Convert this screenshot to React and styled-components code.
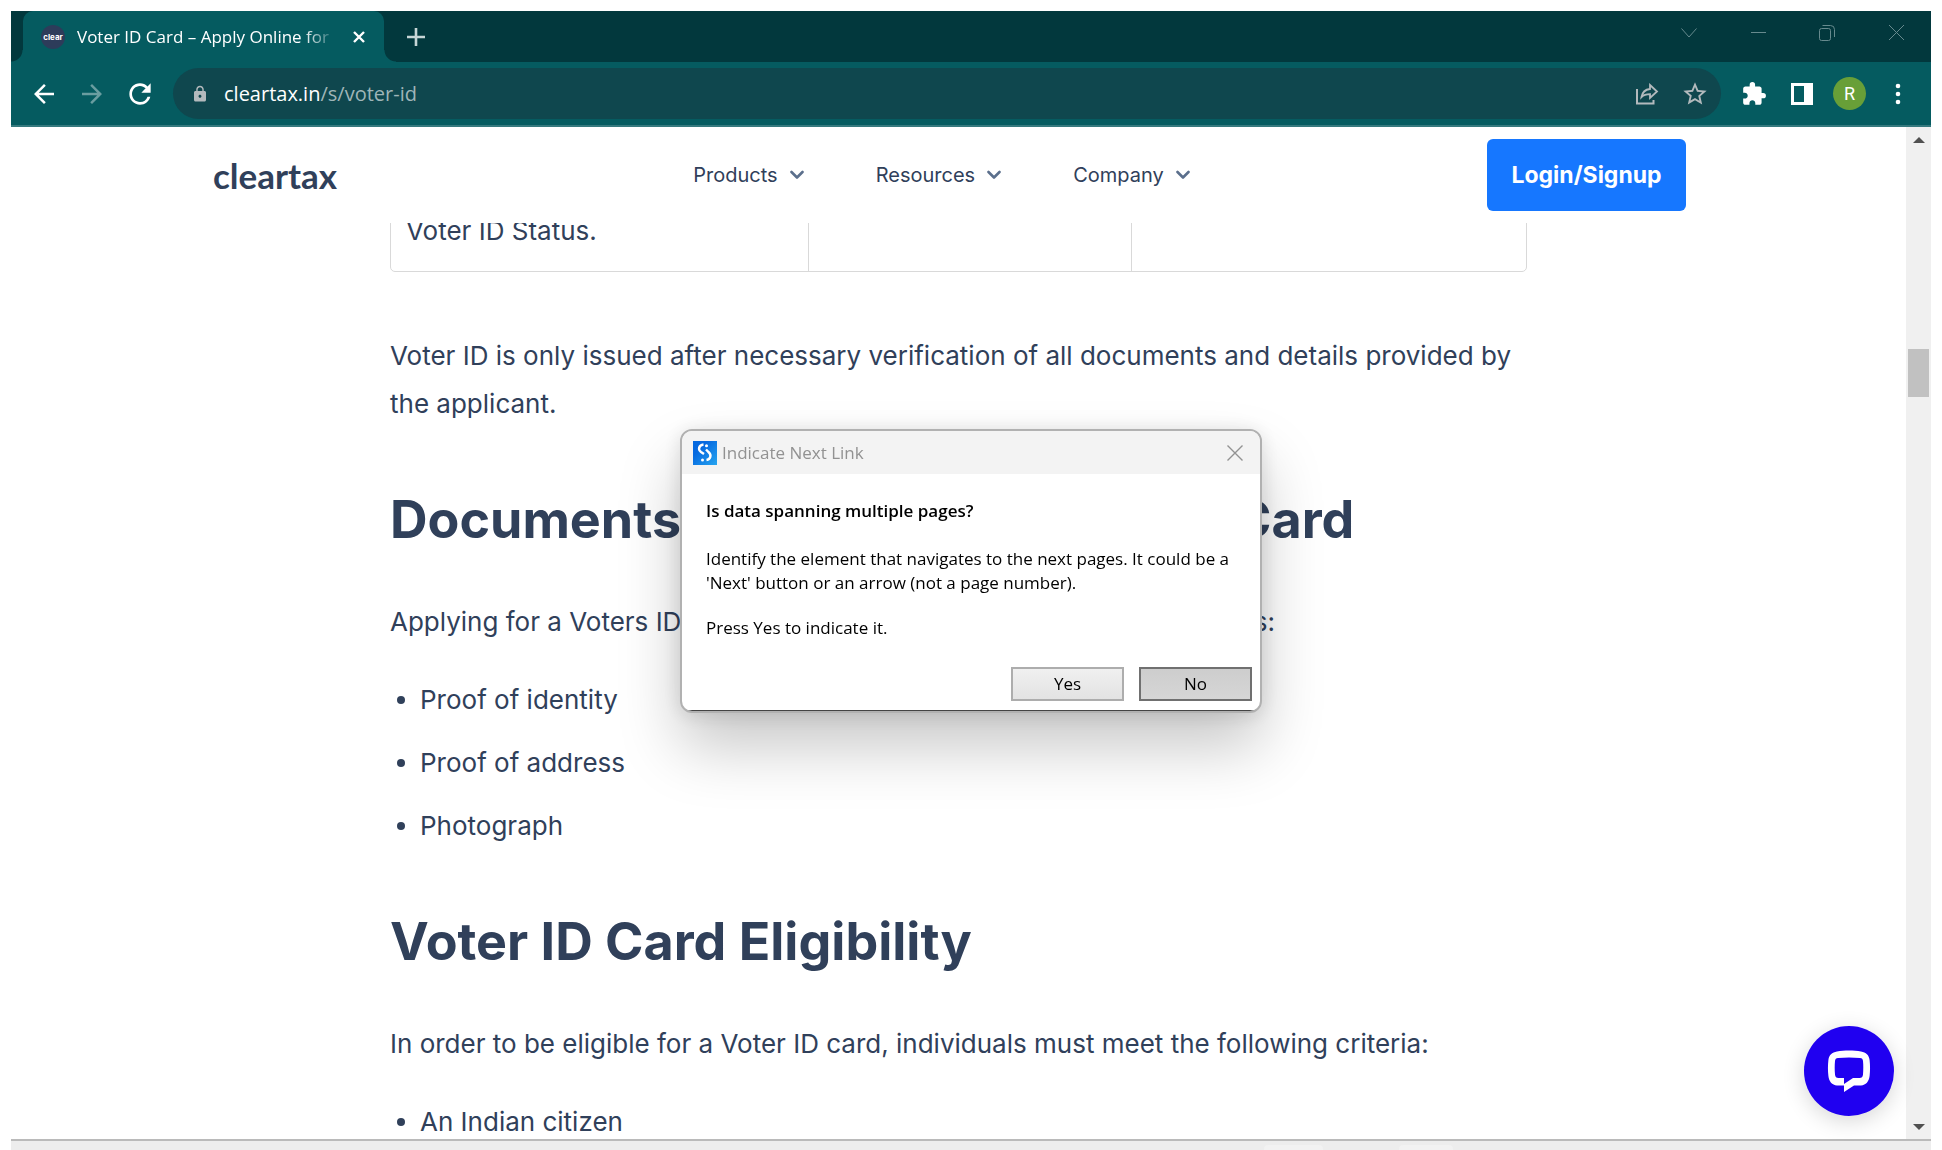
import React from "react";
import styled, { createGlobalStyle } from "styled-components";
import {
  MdArrowBack,
  MdArrowForward,
  MdRefresh,
  MdLock,
  MdStarBorder,
  MdExtension,
} from "react-icons/md";

const uiFont = '"Open Sans", "Noto Sans", sans-serif';
const siteFont = 'Inter, "Liberation Sans", sans-serif';
const ink = "#30405a";

const GlobalStyle = createGlobalStyle`
  *, *::before, *::after { box-sizing: border-box; }
  body { margin: 0; background: #fff; }
  button, input { font: inherit; color: inherit; }
  button { border: 0; padding: 0; background: none; display: flex; align-items: center; justify-content: center; }
  svg { display: block; flex: none; }
`;

const Screen = styled.div`
  height: 100vh;
  padding: 11px 11px 0;
  display: flex;
  flex-direction: column;
  overflow: hidden;
  font-family: ${uiFont};
`;

/* ---------- browser chrome ---------- */

const TabStrip = styled.header`
  flex: none;
  height: 51px;
  padding-left: 12px;
  display: flex;
  align-items: stretch;
  background: #02383d;
`;

const Tab = styled.div`
  position: relative;
  width: 361px;
  padding: 0 15px 0 18px;
  display: flex;
  align-items: center;
  background: #055b60;
  border-radius: 10px 10px 0 0;
  color: #fff;

  &::before,
  &::after {
    content: "";
    position: absolute;
    bottom: 0;
    width: 12px;
    height: 12px;
  }
  &::before {
    right: 100%;
    background: radial-gradient(circle at 0 0, transparent 11px, #055b60 12px);
  }
  &::after {
    left: 100%;
    background: radial-gradient(circle at 100% 0, transparent 11px, #055b60 12px);
  }
`;

const Favicon = styled.span`
  flex: none;
  width: 24px;
  height: 24px;
  margin-right: 12px;
  display: flex;
  align-items: center;
  justify-content: center;
  border-radius: 50%;
  background: #2d3c5a;
  font: 700 8px ${siteFont};
`;

const TabTitle = styled.span`
  flex: 1;
  overflow: hidden;
  white-space: nowrap;
  font-size: 17px;
  line-height: 24px;
  mask-image: linear-gradient(90deg, #000 226px, transparent 260px);
`;

const TabClose = styled.button`
  width: 20px;
  height: 24px;
`;

const NewTab = styled.button`
  width: 36px;
  margin-left: 14px;
`;

const WindowControls = styled.div`
  margin: 0 20px 8px auto;
  display: flex;
  align-items: center;
  gap: 39px;

  button {
    width: 30px;
    height: 30px;
  }
`;

const Toolbar = styled.div`
  flex: none;
  height: 65px;
  padding: 0 17px 0 18px;
  display: flex;
  align-items: center;
  background: #055b60;
  border-bottom: 2px solid #35797e;
  color: #fff;
`;

const NavButtons = styled.div`
  display: flex;
  gap: 18px;
  margin-right: 18px;

  button {
    width: 30px;
    height: 32px;
  }
  button:nth-child(2) {
    color: #6a9da0;
  }
`;

const AddressBar = styled.div`
  flex: 1;
  height: 51px;
  padding: 0 10px 0 18px;
  display: flex;
  align-items: center;
  gap: 15px;
  border-radius: 26px;
  background: #0f474e;
  color: #b3babd;

  button {
    width: 33px;
  }
`;

const Url = styled.a`
  flex: 1;
  font-size: 20px;
  line-height: 26px;
  color: #9fb5b8;
  text-decoration: none;

  b {
    font-weight: 400;
    color: #fff;
  }
`;

const Extensions = styled.div`
  margin-left: 16px;
  display: flex;
  align-items: center;
  gap: 15px;

  button {
    width: 33px;
  }
`;

const Avatar = styled.button`
  height: 33px;
  border-radius: 50%;
  background: #689f38;
  font-family: Roboto, sans-serif;
  font-size: 18px;
`;

/* ---------- page ---------- */

const Viewport = styled.div`
  flex: 1;
  min-height: 0;
  display: flex;
`;

const Site = styled.div`
  flex: 1;
  min-width: 0;
  overflow: hidden;
  font-family: ${siteFont};
  color: ${ink};
`;

const SiteNav = styled.nav`
  position: relative;
  z-index: 1;
  height: 96px;
  padding: 0 220px 0 202px;
  display: grid;
  grid-template-columns: 1fr auto 1fr;
  align-items: center;
  background: #fff;
`;

const Logo = styled.a`
  color: ${ink};
  font: 700 35px/42px Lato, sans-serif;
  text-decoration: none;
`;

const Menu = styled.div`
  margin-right: 16px;
  display: flex;
  gap: 72px;
`;

const MenuItem = styled.button`
  gap: 12px;
  font-size: 20px;
  line-height: 28px;
`;

const Login = styled.button`
  justify-self: end;
  width: 199px;
  height: 72px;
  border-radius: 6px;
  background: #1677ff;
  color: #fff;
  font-size: 23px;
  font-weight: 700;
`;

const Article = styled.article`
  width: 60%;
  max-width: 1137px;
  margin: -33px auto 0;
  font-size: 26px;
  line-height: 48px;

  h2 {
    margin: 60px 0 46px;
    font-size: 52px;
    line-height: 64px;
    font-weight: 650;
    white-space: nowrap;
  }
  p {
    margin: 0;
  }
  ul {
    margin: 30px 0 0;
    padding: 0;
    list-style: none;
  }
  li {
    display: flex;
    align-items: center;
    gap: 15px;
    padding-left: 7px;
  }
  li::before {
    content: "";
    width: 8px;
    height: 8px;
    border-radius: 50%;
    background: ${ink};
  }
  li + li {
    margin-top: 15px;
  }
`;

const StatusTable = styled.table`
  width: 100%;
  max-width: 1135px;
  margin-bottom: 60px;
  table-layout: fixed;
  border-collapse: separate;
  border-spacing: 0;
  border: 1px solid #d9d9d9;
  border-radius: 5px;

  td {
    padding: 20px 15px;
    line-height: 40px;
    height: 80px;
  }
  td + td {
    border-left: 1px solid #d9d9d9;
  }
`;

const Scrollbar = styled.div`
  flex: none;
  width: 25px;
  padding: 10px 2px 9px;
  display: flex;
  flex-direction: column;
  align-items: center;
  background: #f0f0f0;
`;

const Thumb = styled.div`
  width: 21px;
  height: 48px;
  margin: 206px 0 auto;
  background: #c1c1c1;
`;

const Desktop = styled.footer`
  flex: none;
  height: 11px;
  padding: 4px 478px 0 0;
  display: flex;
  justify-content: flex-end;
  gap: 76px;
  border-top: 2px solid #bababa;
  background: #ededed;
`;

const Peek = styled.span`
  width: ${(p) => p.$w}px;
  border-radius: 4px 4px 0 0;
  background: #f2f2f2;
`;

const Chat = styled.button`
  position: fixed;
  right: 48px;
  bottom: 34px;
  width: 90px;
  height: 90px;
  border-radius: 50%;
  background: #2000f0;
  box-shadow: 0 5px 22px rgba(0, 0, 0, 0.16);
`;

/* ---------- dialog ---------- */

const Overlay = styled.div`
  position: fixed;
  inset: 0;
  padding-bottom: 8px;
  display: flex;
  align-items: center;
  justify-content: center;
  pointer-events: none;
`;

const Dialog = styled.section`
  width: 582px;
  overflow: hidden;
  border: 2px solid #b1b1b1;
  border-radius: 12px;
  background: #fff;
  background-clip: padding-box;
  box-shadow: 0 34px 62px rgba(0, 0, 0, 0.22), 0 2px 20px rgba(0, 0, 0, 0.12);
  font-size: 17px;
  line-height: 24px;
  color: #000;
  pointer-events: auto;

  p {
    margin: 0 0 21px;
  }
`;

const TitleBar = styled.div`
  height: 43px;
  padding: 0 17px 0 11px;
  display: flex;
  align-items: center;
  background: #f3f3f3;
  color: #929292;

  h1 {
    flex: 1;
    margin: 0 0 0 5px;
    font-size: 17px;
    font-weight: 400;
  }
`;

const Message = styled.div`
  padding: 25px 20px 6px 24px;

  p:first-child {
    margin-bottom: 24px;
    font-weight: 600;
  }
`;

const Actions = styled.div`
  padding: 0 8px 9px;
  display: flex;
  justify-content: flex-end;
  gap: 15px;
  border-bottom: 1px solid #444;
`;

const Choice = styled.button`
  width: 113px;
  height: 34px;
  border: 2px solid ${(p) => (p.$focused ? "#707070" : "#adadad")};
  background: ${(p) =>
    p.$focused
      ? "linear-gradient(#cdcdcd, #d6d6d6)"
      : "linear-gradient(#f0f0f0, #e3e3e3)"};
`;

/* ---------- drawings ---------- */

const Stroke = ({ w, h, d, color = "currentColor", width = 1 }) => (
  <svg width={w} height={h} viewBox={`0 0 ${w} ${h}`} fill="none" stroke={color} strokeWidth={width} aria-hidden="true">
    <path d={d} />
  </svg>
);

const dim = "#678a8e";

const Chevron = () => (
  <svg width="14" height="10" viewBox="0 0 14 10" fill="none" stroke="#5b6f8c" strokeWidth="2.6" strokeLinecap="round" strokeLinejoin="round">
    <path d="M1.5 2L7 7.5 12.5 2" />
  </svg>
);

const ShareIcon = () => (
  <svg width="24" height="24" viewBox="0 0 24 24" fill="none" stroke="currentColor" strokeWidth="2">
    <path d="M2 7v14.5h16.5v-3.5" />
    <path d="M15 3l7 6.5-7 6.5v-3.8c-4 0-6.5.8-8.5 2.8.8-4.5 3.5-7.5 8.5-8z" strokeWidth="1.8" />
  </svg>
);

const DialogIcon = () => (
  <svg width="24" height="24" viewBox="0 0 24 24">
    <defs>
      <linearGradient id="tile" x1="0" y1="0" x2="1" y2="1">
        <stop offset="0.3" stopColor="#0669e0" />
        <stop offset="1" stopColor="#26a5f0" />
      </linearGradient>
    </defs>
    <rect width="24" height="24" fill="url(#tile)" />
    <g fill="none" stroke="#fff" strokeWidth="2.4">
      <path d="M10.5 3.5C6 4 4.5 8.5 8 11l3 2" />
      <path d="M13 8.5l2.5 2.5c3.5 3 2 7.5-2 8" />
    </g>
    <circle cx="13.5" cy="4.8" r="1.5" fill="#fff" />
    <circle cx="9.5" cy="19" r="1.5" fill="#fff" />
  </svg>
);

const ChatIcon = () => (
  <svg width="44" height="44" viewBox="0 0 44 44">
    <path
      fill="#fff"
      fillRule="evenodd"
      d="M10 2.5C17 1.2 27 1.2 34 2.5c5 .9 8 3.5 8.6 8.5.6 5 .6 11 0 16-.7 5.500-3.600 9-8.600 9.500h-7L17 43v-6.500h-7c-5-.5-8-4-8.600-9.500-.6-5-.6-11 0-16C2 6 5 3.400 10 2.500zM11 9c-2 .3-2.700 1-3 3-.4 4-.4 9 0 13.500.2 2.400 1.300 3.500 3.500 3.500H17v6l9-6h6.500c2.200 0 3.300-1.100 3.500-3.500.4-4.500.4-9.500 0-13.500-.3-2-1-2.700-3-3-7-.8-15-.8-22 0z"
    />
  </svg>
);

const Arrow = ({ up }) => (
  <svg width="12" height="6" viewBox="0 0 12 6" fill="#505050">
    <path d={up ? "M0 6L6 0l6 6z" : "M0 0h12L6 6z"} />
  </svg>
);

const menu = ["Products", "Resources", "Company"];

export default function App() {
  return (
    <Screen>
      <GlobalStyle />
      <TabStrip>
        <Tab>
          <Favicon>clear</Favicon>
          <TabTitle>Voter ID Card – Apply Online for</TabTitle>
          <TabClose aria-label="Close tab">
            <Stroke w={12} h={12} d="M1 1l10 10M11 1L1 11" width={2.4} />
          </TabClose>
        </Tab>
        <NewTab aria-label="New tab">
          <Stroke w={18} h={18} d="M9 0v18M0 9h18" color="#c6d5d6" width={2.6} />
        </NewTab>
        <WindowControls>
          <button aria-label="Search tabs"><Stroke w={16} h={10} d="M.5.5L8 9 15.5.5" color={dim} /></button>
          <button aria-label="Minimize"><Stroke w={15} h={3} d="M0 1.5h15" color={dim} /></button>
          <button aria-label="Restore">
            <Stroke w={16} h={16} color={dim} d="M2.5 3.5h7q2 0 2 2v8q0 2-2 2h-7q-2 0-2-2v-8q0-2 2-2zM3.5.5h8q4 0 4 4v7.5" />
          </button>
          <button aria-label="Close"><Stroke w={15} h={15} d="M0 0l15 15M15 0L0 15" color={dim} /></button>
        </WindowControls>
      </TabStrip>

      <Toolbar>
        <NavButtons>
          <button aria-label="Back"><MdArrowBack size={30} /></button>
          <button aria-label="Forward"><MdArrowForward size={30} /></button>
          <button aria-label="Reload"><MdRefresh size={32} /></button>
        </NavButtons>
        <AddressBar>
          <MdLock size={18} />
          <Url href="#top"><b>cleartax.in</b>/s/voter-id</Url>
          <button aria-label="Share"><ShareIcon /></button>
          <button aria-label="Bookmark"><MdStarBorder size={28} /></button>
        </AddressBar>
        <Extensions>
          <button aria-label="Extensions"><MdExtension size={26} /></button>
          <button aria-label="Side panel">
            <svg width="22" height="22" viewBox="0 0 22 22"><path fill="#fff" fillRule="evenodd" d="M0 0h22v22H0zM3 3v16h10V3z" /></svg>
          </button>
          <Avatar aria-label="Profile">R</Avatar>
          <button aria-label="Menu">
            <svg width="22" height="22" viewBox="0 0 22 22" fill="#fff">
              <circle cx="11" cy="3" r="2.3" /><circle cx="11" cy="11" r="2.3" /><circle cx="11" cy="19" r="2.3" />
            </svg>
          </button>
        </Extensions>
      </Toolbar>

      <Viewport>
        <Site>
          <SiteNav>
            <Logo href="#top">cleartax</Logo>
            <Menu>
              {menu.map((label) => (
                <MenuItem key={label}>{label}<Chevron /></MenuItem>
              ))}
            </Menu>
            <Login>Login/Signup</Login>
          </SiteNav>
          <Article>
            <StatusTable>
              <colgroup>
                <col width="417" /><col width="323" /><col width="395" />
              </colgroup>
              <tbody>
                <tr><td>Voter ID Status.</td><td /><td /></tr>
              </tbody>
            </StatusTable>
            <p>Voter ID is only issued after necessary verification of all documents and details provided by the applicant.</p>
            <h2>Documents Required for Voter ID Card</h2>
            <p>Applying for a Voters ID card requires some of the following documents:</p>
            <ul>
              <li>Proof of identity</li>
              <li>Proof of address</li>
              <li>Photograph</li>
            </ul>
            <h2>Voter ID Card Eligibility</h2>
            <p>In order to be eligible for a Voter ID card, individuals must meet the following criteria:</p>
            <ul>
              <li>An Indian citizen</li>
            </ul>
          </Article>
        </Site>
        <Scrollbar>
          <Arrow up />
          <Thumb />
          <Arrow />
        </Scrollbar>
      </Viewport>
      <Desktop>
        <Peek $w={59} />
        <Peek $w={54} />
      </Desktop>

      <Chat aria-label="Open chat"><ChatIcon /></Chat>

      <Overlay>
        <Dialog role="dialog" aria-labelledby="dialog-title">
          <TitleBar>
            <DialogIcon />
            <h1 id="dialog-title">Indicate Next Link</h1>
            <button aria-label="Close dialog"><Stroke w={16} h={16} d="M.5.5l15 15M15.5.5l-15 15" width={1.4} /></button>
          </TitleBar>
          <Message>
            <p>Is data spanning multiple pages?</p>
            <p>Identify the element that navigates to the next pages. It could be a 'Next' button or an arrow (not a page number).</p>
            <p>Press Yes to indicate it.</p>
          </Message>
          <Actions>
            <Choice>Yes</Choice>
            <Choice $focused>No</Choice>
          </Actions>
        </Dialog>
      </Overlay>
    </Screen>
  );
}
